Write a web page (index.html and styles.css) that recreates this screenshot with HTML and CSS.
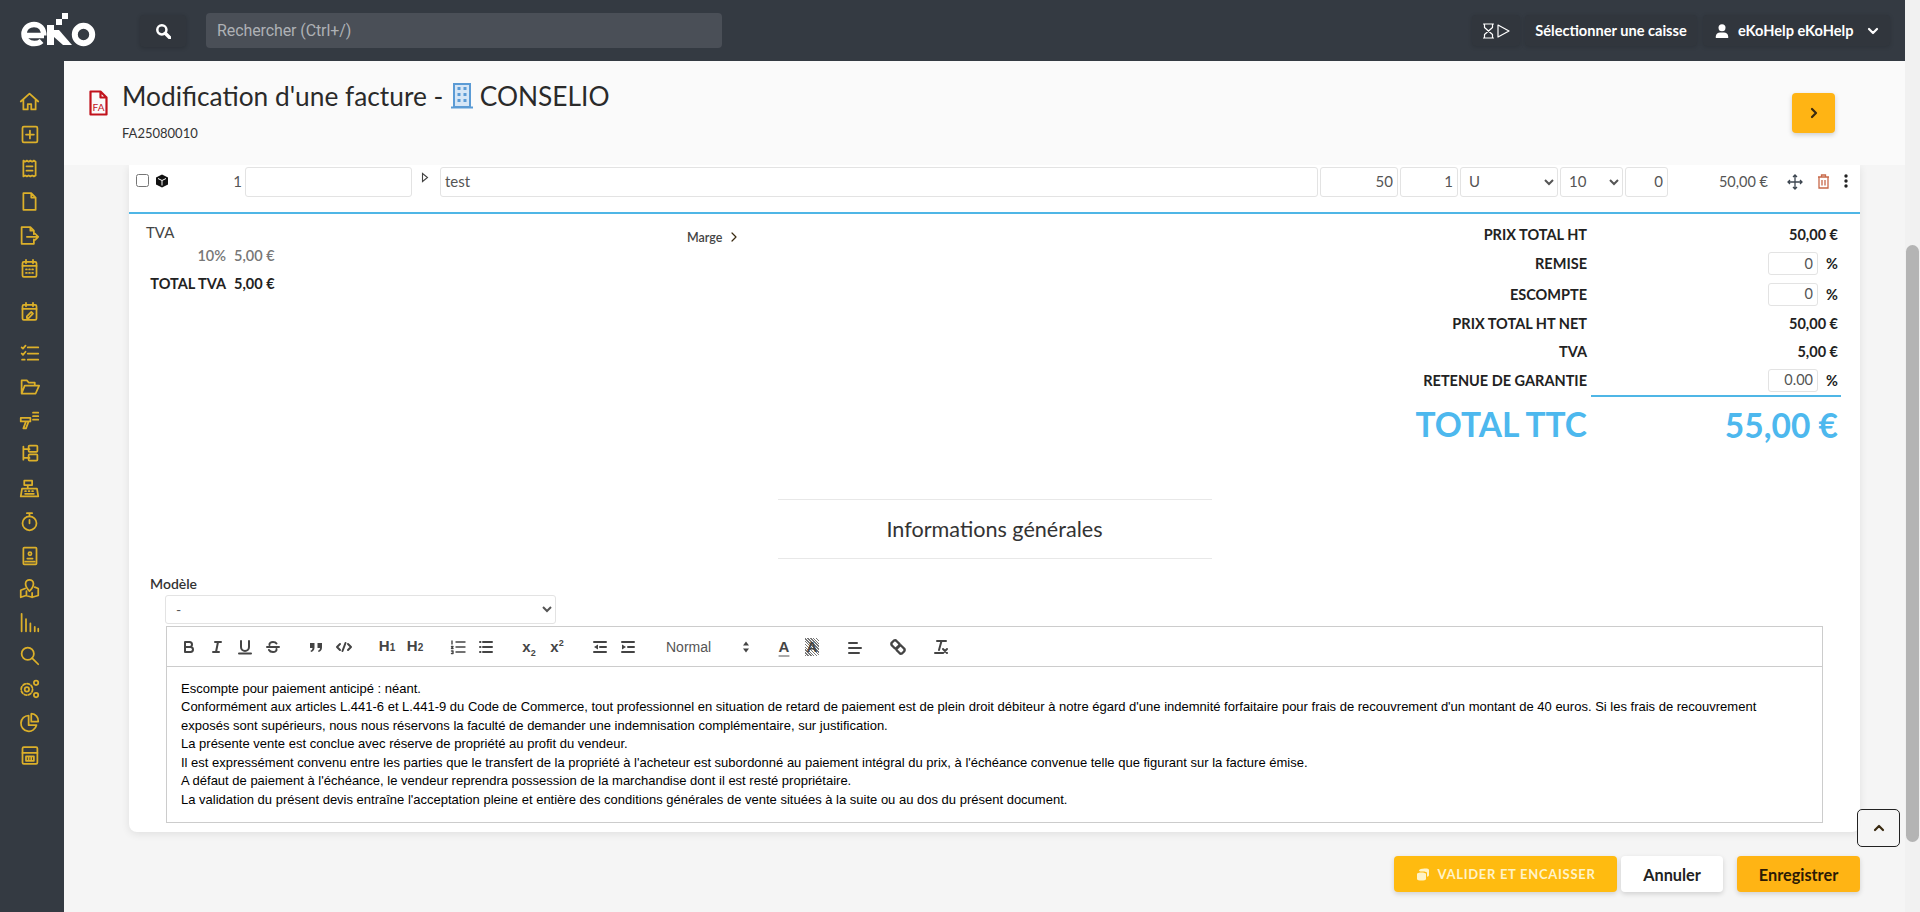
FILE: index.html
```html
<!DOCTYPE html>
<html lang="fr">
<head>
<meta charset="utf-8">
<title>Modification d'une facture</title>
<link rel="stylesheet" href="styles.css">
</head>
<body>
<div class="app">
  <header class="topbar">
    <a class="logo" aria-label="eKo">
      <svg width="76" height="34" viewBox="0 0 76 34">
        <path class="logo-e" d="M24 22.500H4.500M21.600 28c-2 1.800-4.500 2.600-7.300 2.600C8.500 30.600 4 26.500 4 21s4.300-9.600 10-9.600 9.800 4.100 9.800 11.100"/>
        <rect class="logo-f" x="27" y="12" width="7" height="20"/>
        <rect class="logo-f" x="36" y="6" width="6" height="6"/>
        <rect class="logo-f" x="42" y="0" width="6" height="6"/>
        <path class="logo-f" d="M34 17h5l13 15h-9l-9-8z"/>
        <circle class="logo-o" cx="63.500" cy="21.500" r="8.700"/>
      </svg>
    </a>
    <button class="search-btn" aria-label="Rechercher">
      <svg width="16" height="16" viewBox="0 0 14 14"><circle cx="6" cy="6" r="4" class="w2"/><path d="M9 9l4 4" class="w3"/></svg>
    </button>
    <div class="search-field">Rechercher (Ctrl+/)</div>
    <div class="top-right">
      <div class="top-box timer">
        <svg width="28" height="16" viewBox="0 0 28 16"><path d="M1.500 1h10M1.500 15h10M2.500 1v3.500L10.500 11.500V15M10.500 1v3.500L2.500 11.500V15" class="w1"/><path d="M16 2l11 6-11 6z" class="w1"/></svg>
      </div>
      <div class="top-box caisse">Sélectionner une caisse</div>
      <div class="top-box user">
        <svg width="14" height="14" viewBox="0 0 14 14"><circle cx="7" cy="3.800" r="3.500" fill="#fff"/><path d="M.8 14v-1.500C.8 9.800 3 8.500 5 8.500h4c2 0 4.200 1.300 4.200 4V14z" fill="#fff"/></svg>
        <span>eKoHelp eKoHelp</span>
        <svg class="user-chev" width="12" height="8" viewBox="0 0 12 8"><path d="M2 2l4 4 4-4" class="w2"/></svg>
      </div>
    </div>
  </header>
  <div class="layout">
    <nav class="sidebar">
      <svg class="nav" viewBox="0 0 24 24"><path d="M2 12L12 3l10 9M5 10v11h5v-6h4v6h5V10"/></svg>
      <svg class="nav" viewBox="0 0 24 24"><rect x="4" y="3" width="17" height="18" rx="1.500"/><path d="M12.500 7.500v9M8 12h9"/></svg>
      <svg class="nav" viewBox="0 0 24 24"><path d="M5 3l2 1.200L9 3l2 1.200L13 3l2 1.200L17 3l2 1.200V20l-2 1-2-1-2 1-2-1-2 1-2-1-2 1zM8.500 9.500h7M8.500 14.500h7"/></svg>
      <svg class="nav" viewBox="0 0 24 24"><path d="M5 2.500h9l5 5v14H5zM14 2.500v5h5"/></svg>
      <svg class="nav" viewBox="0 0 24 24"><path d="M3 2.500h10l4 4v4M3 2.500v19h14v-5M13 2.500v4h4M9 13.500h13M18.500 10l3.500 3.500-3.500 3.500"/></svg>
      <svg class="nav" viewBox="0 0 24 24"><rect x="4" y="4.500" width="16" height="17" rx="1.500"/><path d="M8 2v4M16 2v4M4 9h16M8 13h1M11.500 13h1M15 13h1M8 17h1M11.500 17h1M15 17h1"/></svg>
      <svg class="nav gap-a" viewBox="0 0 24 24"><rect x="4" y="4.500" width="16" height="17" rx="1.500"/><path d="M8 2v4M16 2v4M4 9h16M9 17.500l5-5 2 2-5 5H9z"/></svg>
      <svg class="nav gap-b" viewBox="0 0 24 24"><path d="M3 5l1.500 1.500L7.500 3M3 12l1.500 1.500L7.500 10M3.500 19h3M10 5h12M10 12h12M10 19h12"/></svg>
      <svg class="nav" viewBox="0 0 24 24"><path d="M3 20V5h6l2 2.500h7V11M3 20l3.500-9H23l-4 9z"/></svg>
      <svg class="nav" viewBox="0 0 24 24"><path d="M2 9h11v4H2zM8 13l-3 8h3l3-8M16 3h6M16 7h6M16 11h6"/></svg>
      <svg class="nav" viewBox="0 0 24 24"><path d="M5 4v15M5 7h7M5 17h7"/><rect x="11" y="3" width="10" height="7" rx="1"/><rect x="11" y="13" width="10" height="7" rx="1"/></svg>
      <svg class="nav gap-c" viewBox="0 0 24 24"><path d="M2 21l1.500-9h17l1.500 9zM6 8h9V3H6zM10 8v4M7 15h1M11 15h1M15 15h1M7 18h10"/></svg>
      <svg class="nav" viewBox="0 0 24 24"><circle cx="12" cy="14" r="8"/><path d="M9 2.500h6M12 3v3M12 10v4"/></svg>
      <svg class="nav" viewBox="0 0 24 24"><rect x="5" y="3" width="15" height="19" rx="1"/><circle cx="12.500" cy="10" r="1.800"/><path d="M9.500 15.500h6M7 19h11"/></svg>
      <svg class="nav" viewBox="0 0 24 24"><path d="M7 12l-5 2v8l6-2 7 2 7-2v-8l-4-1.500M8.500 15v5M15 17v5"/><path d="M12 15s-4.500-4.500-4.500-8.500a4.500 4.500 0 019 0C16.500 10.500 12 15 12 15z"/></svg>
      <svg class="nav" viewBox="0 0 24 24"><path d="M3 2v20M8 8v14M13 13v9M18 17v5M22 19v3"/></svg>
      <svg class="nav" viewBox="0 0 24 24"><circle cx="10" cy="10" r="7"/><path d="M15 15l7 7"/></svg>
      <svg class="nav" viewBox="0 0 24 24"><circle cx="9" cy="13" r="2.500"/><circle cx="9" cy="13" r="6.500" stroke-dasharray="3 2"/><circle cx="19.500" cy="5.500" r="2.500"/><circle cx="19.500" cy="19.500" r="2.500"/></svg>
      <svg class="nav" viewBox="0 0 24 24"><path d="M11 4a9 9 0 109 11h-9zM14 2v9h8a8 8 0 00-8-9z"/></svg>
      <svg class="nav" viewBox="0 0 24 24"><rect x="4" y="2.500" width="17" height="19" rx="1.500"/><path d="M4 9h17M8 13h9v5H8zM11 13v5M14 13v5"/></svg>
    </nav>
    <main class="main">
      <section class="page-head">
        <svg class="doc-icon" width="19" height="26" viewBox="0 0 19 26"><path d="M1.500 1.500h10l6 6v17h-16zM11.500 1.500v6h6" class="doc-line"/><text x="9.500" y="20.500" text-anchor="middle" class="doc-text">FA</text></svg>
        <div class="page-title">
          <h1>Modification d'une facture - <svg class="building" width="22" height="26" viewBox="0 0 22 26"><path d="M3 1h16v23H3zM0 24.500h22" class="b-line"/><path d="M6.500 4h3v3h-3zM12.500 4h3v3h-3zM6.500 10h3v3h-3zM12.500 10h3v3h-3zM6.500 16h3v3h-3zM12.500 16h3v3h-3z" class="b-fill"/></svg> CONSELIO</h1>
          <p>FA25080010</p>
        </div>
        <button class="next-btn" aria-label="Suivant"><svg width="10" height="12" viewBox="0 0 10 12"><path d="M3 2l4 4-4 4" class="w2 dark"/></svg></button>
      </section>
      <section class="card">
        <div class="line-row">
          <input type="checkbox" class="check">
          <svg class="cube" width="14" height="14" viewBox="0 0 14 14"><path d="M7 .5L13 3.500v7L7 13.500 1 10.500v-7z" fill="#111"/><path d="M3 4.500l4 2 4-2M7 6.500v5" class="cube-l"/></svg>
          <span class="line-no">1</span>
          <input class="fld w-ref" type="text">
          <span class="disclosure"><svg width="8" height="11" viewBox="0 0 8 11"><path d="M1.500 1.500l5 4-5 4z" class="dis"/></svg></span>
          <input class="fld w-des" type="text" value="test">
          <input class="fld w-pu num" type="text" value="50">
          <input class="fld w-qt num" type="text" value="1">
          <select class="fld w-un"><option>U</option></select>
          <select class="fld w-tv"><option>10</option></select>
          <input class="fld w-rm num" type="text" value="0">
          <span class="line-total">50,00 €</span>
          <svg class="act move" width="16" height="16" viewBox="0 0 16 16"><path d="M8 1v14M1 8h14M6 3l2-2 2 2M6 13l2 2 2-2M3 6L1 8l2 2M13 6l2 2-2 2" class="mv"/></svg>
          <svg class="act trash" width="13" height="15" viewBox="0 0 13 15"><path d="M1 3h11M4.500 3V1h4v2M2 3v11h9V3M5 6v5.500M8 6v5.500" class="tr"/></svg>
          <svg class="act dots" width="4" height="14" viewBox="0 0 4 14"><circle cx="2" cy="2" r="1.700"/><circle cx="2" cy="7" r="1.700"/><circle cx="2" cy="12" r="1.700"/></svg>
        </div>
        <div class="summary">
          <div class="tva">
            <div class="tva-head">TVA</div>
            <div class="tva-grid">
              <span class="tva-rate">10%</span><span class="tva-rate">5,00 €</span>
              <strong>TOTAL TVA</strong><strong>5,00 €</strong>
            </div>
          </div>
          <div class="marge">Marge <svg width="8" height="10" viewBox="0 0 8 10"><path d="M2 1l4 4-4 4" class="w1 dark"/></svg></div>
          <div class="totals">
            <span class="t-l">PRIX TOTAL HT</span><span class="t-v">50,00 €</span>
            <span class="t-l">REMISE</span><span class="t-v"><input class="fld mini num" type="text" value="0"><i>%</i></span>
            <span class="t-l">ESCOMPTE</span><span class="t-v"><input class="fld mini num" type="text" value="0"><i>%</i></span>
            <span class="t-l">PRIX TOTAL HT NET</span><span class="t-v">50,00 €</span>
            <span class="t-l">TVA</span><span class="t-v">5,00 €</span>
            <span class="t-l">RETENUE DE GARANTIE</span><span class="t-v"><input class="fld mini num" type="text" value="0.00"><i>%</i></span>
            <span class="t-l ttc">TOTAL TTC</span><span class="t-v ttc ttc-v">55,00 €</span>
          </div>
        </div>
        <h2 class="section-title">Informations générales</h2>
        <label class="model-label">Modèle</label>
        <select class="model-select"><option>-</option></select>
        <div class="editor">
          <div class="toolbar">
            <div class="tb-group">
              <svg class="ti" viewBox="0 0 18 18"><path d="M5 4h4.500a2.500 2.500 0 010 5H5zM5 9h5.500a2.500 2.500 0 010 5H5z"/></svg>
              <svg class="ti" viewBox="0 0 18 18"><path d="M7 4h6M5 14h6M8 14l2-10"/></svg>
              <svg class="ti" viewBox="0 0 18 18"><path d="M5 3v6a4 4 0 008 0V3M3 15.500h12"/></svg>
              <svg class="ti" viewBox="0 0 18 18"><path d="M3 9h12M5.500 7C5 5 7 4 9 4s3 .7 3.500 1.500M12.500 11c.5 2-1.500 3-3.500 3s-3.500-1-4-2"/></svg>
            </div>
            <div class="tb-group">
              <svg class="ti" viewBox="0 0 18 18"><path class="tf nos" d="M3 5h4.500v4.500C7.500 12 6 13.500 4 14l-.5-1.200C5 12.300 5.500 11 5.500 10H3zM10.500 5H15v4.500c0 2.500-1.500 4-3.500 4.500l-.5-1.200c1.500-.5 2-1.800 2-2.800h-2.500z"/></svg>
              <svg class="ti" viewBox="0 0 18 18"><path d="M5 6L2 9l3 3M13 6l3 3-3 3M10.500 5l-3 8"/></svg>
            </div>
            <div class="tb-group">
              <span class="tt">H<small>1</small></span>
              <span class="tt">H<small>2</small></span>
            </div>
            <div class="tb-group">
              <svg class="ti" viewBox="0 0 18 18"><path d="M7 4h9M7 9h9M7 14h9M3 3v3M2.500 8.500h1.500L2.500 10.500H4M2.500 13h1.500v2.500H2.500" class="thin"/></svg>
              <svg class="ti" viewBox="0 0 18 18"><path d="M6 4h9M6 9h9M6 14h9M3 4h.5M3 9h.5M3 14h.5"/></svg>
            </div>
            <div class="tb-group">
              <span class="tt xx">x<sub>2</sub></span>
              <span class="tt xx">x<sup>2</sup></span>
            </div>
            <div class="tb-group">
              <svg class="ti" viewBox="0 0 18 18"><path d="M3 4h12M9 9h6M3 14h12"/><path class="tf nos" d="M7 6.500v5L3 9z"/></svg>
              <svg class="ti" viewBox="0 0 18 18"><path d="M3 4h12M9 9h6M3 14h12"/><path class="tf nos" d="M3 6.500v5L7 9z"/></svg>
            </div>
            <div class="tb-group picker">
              <span>Normal</span>
              <svg width="8" height="12" viewBox="0 0 8 12"><path class="tf nos" d="M4 .5L7 4.500H1zM4 11.500L1 7.500h6z"/></svg>
            </div>
            <div class="tb-group">
              <span class="tt colA">A</span>
              <span class="tt colB"><b>A</b></span>
            </div>
            <div class="tb-group">
              <svg class="ti" viewBox="0 0 18 18"><path d="M3 5h8M3 10h12M3 15h10"/></svg>
            </div>
            <div class="tb-group">
              <svg class="ti link" viewBox="0 0 18 18"><path d="M5 2.500L3 4.500a2 2 0 000 3l2.500 2.500a2 2 0 003 0l1.500-1.500a2 2 0 000-3L7.500 3a2 2 0 00-2.500-.5zM13 15.500l2-2a2 2 0 000-3L12.500 8a2 2 0 00-3 0L8 9.500a2 2 0 000 3l2.500 2.500a2 2 0 002.500.5z"/></svg>
            </div>
            <div class="tb-group">
              <svg class="ti" viewBox="0 0 18 18"><path d="M5 3h9M9.500 3L7 12M3 15h7M11 11l4 4M15 11l-4 4"/></svg>
            </div>
          </div>
          <div class="editor-body">
            <p>Escompte pour paiement anticipé : néant.</p>
            <p>Conformément aux articles L.441-6 et L.441-9 du Code de Commerce, tout professionnel en situation de retard de paiement est de plein droit débiteur à notre égard d'une indemnité forfaitaire pour frais de recouvrement d'un montant de 40 euros. Si les frais de recouvrement exposés sont supérieurs, nous nous réservons la faculté de demander une indemnisation complémentaire, sur justification.</p>
            <p>La présente vente est conclue avec réserve de propriété au profit du vendeur.</p>
            <p>Il est expressément convenu entre les parties que le transfert de la propriété à l'acheteur est subordonné au paiement intégral du prix, à l'échéance convenue telle que figurant sur la facture émise.</p>
            <p>A défaut de paiement à l'échéance, le vendeur reprendra possession de la marchandise dont il est resté propriétaire.</p>
            <p>La validation du présent devis entraîne l'acceptation pleine et entière des conditions générales de vente situées à la suite ou au dos du présent document.</p>
          </div>
        </div>
      </section>
      <div class="actions">
        <button class="btn btn-cash">
          <svg width="14" height="14" viewBox="0 0 14 14"><path d="M3 3.500C3 1.500 13 .5 13 3v5c0 1-1 1.500-2 1.700V6C11 5 9 4.500 7 4.500 5 4.500 3 4.500 3 3.500z" fill="#fff3c8"/><path d="M1 7c0-2 9-2 9 0v5c0 2-9 2-9 0z" fill="#fff3c8"/></svg>
          VALIDER ET ENCAISSER
        </button>
        <button class="btn btn-cancel">Annuler</button>
        <button class="btn btn-save">Enregistrer</button>
      </div>
      <button class="to-top" aria-label="Haut de page"><svg width="12" height="8" viewBox="0 0 12 8"><path d="M2 6l4-4 4 4" class="w2 dark"/></svg></button>
    </main>
  </div>
</div>
<div class="scrollbar"><div class="thumb"></div></div>
</body>
</html>
```
FILE: styles.css
```css
* { box-sizing: border-box; }
html, body { margin: 0; height: 912px; overflow: hidden; }
body { display: flex; font-family: "Lato", "Noto Sans", sans-serif; color: #222; background: #f5f5f5; font-size: 14.500px; }
button { font-family: inherit; border: 0; cursor: pointer; }
svg { display: block; flex: none; }

.w1, .w2, .w3 { fill: none; stroke: #fff; stroke-linecap: round; stroke-linejoin: round; }
.w1 { stroke-width: 1.2; }
.w2 { stroke-width: 2.2; }
.w3 { stroke-width: 3; }
.dark { stroke: #3a2a10; }

.app { flex: 1; min-width: 0; display: flex; flex-direction: column; }
.scrollbar { width: 15px; background: #f1f1f1; padding: 245px 1px 0; }
.thumb { height: 597px; border-radius: 7px; background: #b4b4b4; }

.topbar { height: 61px; flex: none; background: #343a42; display: flex; align-items: center; padding-left: 20px; }
.logo { width: 76px; height: 34px; margin-top: -1px; }
.logo-f { fill: #fff; }
.logo-e { fill: none; stroke: #fff; stroke-width: 5.500; }
.logo-o { fill: none; stroke: #fff; stroke-width: 6; }
.search-btn { width: 46px; height: 32px; margin-left: 44px; background: #31363d; border-radius: 4px; box-shadow: 0 1px 4px rgba(0,0,0,.18); display: flex; align-items: center; justify-content: center; }
.search-field { width: 516px; height: 35px; margin-left: 20px; background: #4a4f57; border-radius: 4px; color: #aeb1b5; font: 16px/35px "Roboto", sans-serif; letter-spacing: -.1px; padding-left: 11px; }
.top-right { margin-left: auto; display: flex; gap: 5px; padding-right: 15px; }
.top-box { height: 31px; background: #31363d; border-radius: 4px; box-shadow: 0 1px 4px rgba(0,0,0,.15); display: flex; align-items: center; color: #fff; font-weight: 700; font-size: 14.600px; }
.timer { width: 48px; justify-content: center; }
.caisse { width: 172px; justify-content: center; }
.user { width: 187px; margin-left: 1px; padding-left: 12px; gap: 9px; }
.user-chev { margin-left: 5px; }

.layout { flex: 1; min-height: 0; display: flex; }
.sidebar { width: 64px; flex: none; background: #343a42; display: flex; flex-direction: column; align-items: center; padding-top: 30px; }
.nav { width: 21px; height: 21px; margin-bottom: 12.400px; margin-right: 6px; fill: none; stroke: #dcb02a; stroke-width: 2; stroke-linejoin: round; stroke-linecap: round; }
.gap-a { margin-top: 9.600px; }
.gap-b { margin-top: 8.600px; }
.gap-c { margin-top: 1.600px; }

.main { flex: 1; min-width: 0; display: flex; flex-direction: column; position: relative; }
.page-head { height: 104px; flex: none; background: #fafafa; display: flex; padding: 17px 70px 0 25px; position: relative; z-index: 1; }
.doc-icon { margin: 12px 15px 0 0; }
.doc-line { fill: none; stroke: #c1121c; stroke-width: 2.200; stroke-linejoin: round; }
.doc-text { fill: #c1121c; font: 10px "Lato", sans-serif; }
.page-title { flex: 1; margin-left: -1px; }
.page-title h1 { margin: 0; display: flex; align-items: center; gap: 1px; font-size: 26.300px; line-height: 36px; font-weight: 400; color: #2a2a2a; white-space: pre; }
.building { margin-right: -1px; }
.b-line { fill: #d6e6f6; stroke: #5b9bd5; stroke-width: 2; }
.b-fill { fill: #5b9bd5; }
.page-title p { margin: 10px 0 0; font-size: 13px; line-height: 18px; color: #333; }
.next-btn { width: 43px; height: 40px; margin-top: 15px; border-radius: 4px; background: #ffb414; box-shadow: 0 2px 5px rgba(0,0,0,.18); display: flex; align-items: center; justify-content: center; }

.card { height: 667px; flex: none; margin: 0 45px 0 65px; background: #fff; border-radius: 0 0 8px 8px; box-shadow: 0 2px 8px rgba(0,0,0,.09); display: flex; flex-direction: column; }
.line-row { height: 49px; flex: none; border-bottom: 2px solid #4fb6e6; display: flex; align-items: flex-start; padding: 2px 0 0 7px; }
.check { width: 13px; height: 13px; margin: 7px 0 0; }
.cube { margin: 7px 0 0 6px; }
.cube-l { fill: none; stroke: #fff; stroke-width: 1; }
.line-no { width: 74px; text-align: right; line-height: 29px; color: #555; font-size: 15px; padding-right: 1px; }
.fld { height: 30px; border: 1px solid #e3e3e3; border-radius: 3px; background: #fff; color: #555; font: 15px "Lato", sans-serif; padding: 0 4px 2px; outline: 0; }
.num { text-align: right; }
.w-ref { width: 167px; margin-left: 2px; }
.disclosure { width: 28px; padding: 5px 0 0 9px; }
.dis { fill: none; stroke: #444; stroke-width: 1.100; }
.w-des { width: 878px; margin-right: 2px; }
.w-pu { width: 78px; margin-right: 2px; }
.w-qt { width: 58px; margin-right: 2px; }
.w-un { width: 98px; margin-right: 2px; }
.w-tv { width: 63px; margin-right: 2px; }
.w-rm { width: 43px; }
.line-total { width: 100px; text-align: right; line-height: 29px; color: #555; font-size: 14.500px; }
.act { margin-top: 7px; }
.move { margin-left: 19px; }
.mv { fill: none; stroke: #3d4650; stroke-width: 1.300; }
.trash { margin-left: 14px; }
.tr { fill: none; stroke: #c8694a; stroke-width: 1.300; }
.dots { margin-left: 14px; fill: #222; }

.summary { height: 235px; flex: none; display: flex; }
.tva { width: 558px; padding: 8px 0 0 17px; }
.tva-head { font-size: 15px; line-height: 20px; color: #444; }
.tva-grid { display: grid; grid-template-columns: 80px auto; justify-content: start; column-gap: 8px; row-gap: 10px; margin-top: 5px; line-height: 18px; }
.tva-grid > :nth-child(odd) { text-align: right; }
.tva-rate { color: #777; font-weight: 600; }
.tva-grid strong { font-weight: 700; color: #222; }
.marge { flex: 1; font-size: 12.500px; color: #444; font-weight: 600; display: flex; align-items: center; gap: 8px; height: 20px; margin-top: 13px; }
.totals { width: 500px; margin-right: 19px; padding-top: 6px; display: grid; grid-template-columns: 1fr 250px; grid-template-rows: 28px 31px 30px 28px 28px 30px 52px; column-gap: 4px; }
.t-l { font-weight: 700; font-size: 14.500px; text-align: right; align-self: center; white-space: nowrap; }
.t-v { font-weight: 700; font-size: 14.500px; display: flex; align-items: center; justify-content: flex-end; padding-right: 3px; }
.t-v i { font-style: normal; width: 20px; text-align: right; }
.mini { width: 50px; height: 23px; font-size: 14.500px; font-weight: 400; padding-bottom: 1px; }
.t-l.ttc, .t-v.ttc { color: #4db8ee; font-size: 33.500px; font-weight: 700; line-height: 45px; padding-top: 7px; }
.ttc-v { border-top: 2px solid #4fb6e6; }

.section-title { flex: none; width: 434px; height: 60px; margin: 50px auto 0; border-top: 1px solid #e8e8e8; border-bottom: 1px solid #e8e8e8; text-align: center; font-size: 21.600px; font-weight: 400; line-height: 58px; color: #333; }
.model-label { flex: none; margin: 15px 0 0 21px; height: 21px; line-height: 20px; font-weight: 600; color: #333; font-size: 14px; }
.model-select { flex: none; width: 391px; height: 29px; margin-left: 36px; border: 1px solid #e3e3e3; border-radius: 3px; background: #fff; font: 14px "Lato", sans-serif; color: #555; padding: 0 6px; }
.editor { flex: none; height: 197px; margin: 2px 37px 0 37px; border: 1px solid #ccc; background: #fff; }
.toolbar { height: 40px; border-bottom: 1px solid #ccc; display: flex; align-items: center; padding-left: 8px; gap: 15px; }
.tb-group { display: flex; align-items: center; }
.ti { width: 18px; height: 18px; margin: 0 5px; fill: none; stroke: #444; stroke-width: 2; stroke-linecap: round; stroke-linejoin: round; }
.ti .thin { stroke-width: 1.400; }
.link { stroke-width: 2.400; }
.tf { fill: #444; }
.nos { stroke: none; }
.tt { width: 28px; text-align: center; font: 700 15px/18px "Liberation Sans", sans-serif; color: #444; }
.tt small { font-size: 10px; }
.xx sub, .xx sup { font-size: 9px; line-height: 0; }
.picker { width: 98px; padding: 0 5px 0 9px; justify-content: space-between; font: 400 14px "Liberation Sans", sans-serif; color: #555; }
.colA { text-decoration: underline; text-decoration-color: #aaa; text-decoration-thickness: 2px; text-underline-offset: 3px; }
.colB b { display: inline-block; width: 14px; background: repeating-linear-gradient(45deg, #777 0 1px, #fff 1px 2px); color: #444; }
.editor-body { padding: 12.500px 14px 0; font: 13px/18.500px "Liberation Sans", sans-serif; color: #000; }
.editor-body p { margin: 0; }

.actions { flex: none; margin: 24px 45px 0 0; display: flex; justify-content: flex-end; }
.btn { height: 36px; border-radius: 4px; box-shadow: 0 2px 5px rgba(0,0,0,.15); display: flex; align-items: center; justify-content: center; font-weight: 700; font-size: 16.300px; }
.btn-cash { width: 223px; gap: 8px; background: #ffbb10; color: #fff3c8; font-size: 13px; letter-spacing: .7px; }
.btn-cancel { width: 102px; margin-left: 4px; background: #fff; color: #222; }
.btn-save { width: 123px; margin-left: 14px; background: #ffb414; color: #2c1a05; }
.to-top { position: absolute; right: 5px; top: 748px; width: 43px; height: 38px; background: rgba(245,245,245,.9); border: 1px solid #222; border-radius: 5px; display: flex; align-items: center; justify-content: center; }
```
